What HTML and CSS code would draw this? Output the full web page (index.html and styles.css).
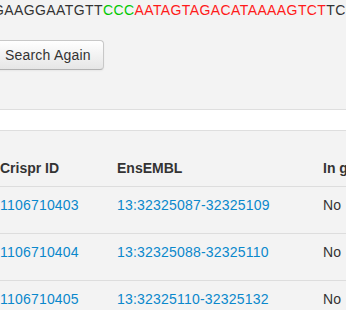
FILE: index.html
```html
<!DOCTYPE html>
<html lang="en">
    <head>
        <meta charset="utf-8" />
        <title>Crispr search results</title>
        <link rel="stylesheet" href="styles.css">
    </head>
    <body>
        <div class="wrap">
            <p class="seq">GAAGGAATGTT<span class="pam">CCC</span><span class="hit">AATAGTAGACATAAAAGTCT</span>TCGATCCAG</p>
            <div class="actions">
                <button class="btn" type="button">Search Again</button>
            </div>
        </div>
        <div class="bar"></div>
        <div class="wrap">
            <table class="results">
                <thead>
                    <tr>
                        <th class="c-id">Crispr ID</th>
                        <th class="c-loc">EnsEMBL</th>
                        <th>In gene</th>
                    </tr>
                </thead>
                <tbody>
                    <tr>
                        <td><a href="#">1106710403</a></td>
                        <td><a href="#">13:32325087-32325109</a></td>
                        <td>No</td>
                    </tr>
                    <tr>
                        <td><a href="#">1106710404</a></td>
                        <td><a href="#">13:32325088-32325110</a></td>
                        <td>No</td>
                    </tr>
                    <tr>
                        <td><a href="#">1106710405</a></td>
                        <td><a href="#">13:32325110-32325132</a></td>
                        <td>No</td>
                    </tr>
                </tbody>
            </table>
        </div>
    </body>
</html>
```

FILE: styles.css
```css
* { margin: 0; padding: 0; box-sizing: border-box; }
html, body { overflow: hidden; }
body { font: 14px/20px 'Liberation Sans', Arial, sans-serif; color: #333; background: #f3f3f3; letter-spacing: .2px; }
.wrap { margin-left: -8px; width: 700px; }

.seq { white-space: nowrap; margin-left: 1px; letter-spacing: .4px; }
.seq .pam { color: #00c800; }
.seq .hit { color: #ff1a1a; }

.actions { padding-top: 20px; }
.btn { display: inline-block; height: 30px; padding: 4px 12px; font: inherit; letter-spacing: .2px; color: #333; border: 1px solid #c8c8c8; border-bottom-color: #b3b3b3; border-radius: 4px; background: linear-gradient(#ffffff, #e6e6e6); box-shadow: inset 0 1px 0 rgba(255,255,255,.2), 0 1px 2px rgba(0,0,0,.05); }

.bar { height: 22px; margin-top: 39px; background: #fff; border-top: 1px solid #dedede; border-bottom: 1px solid #dedede; }

.results { margin-top: 19px; border-collapse: collapse; }
.results th, .results td { padding: 8px; text-align: left; vertical-align: top; white-space: nowrap; }
.results th { font-weight: bold; vertical-align: bottom; letter-spacing: 0; }
.results td { height: 47px; border-top: 1px solid #dddddd; }
.results .c-id { width: 117px; }
.results .c-loc { width: 206px; }
.results a { color: #0a88cc; text-decoration: none; }
```
